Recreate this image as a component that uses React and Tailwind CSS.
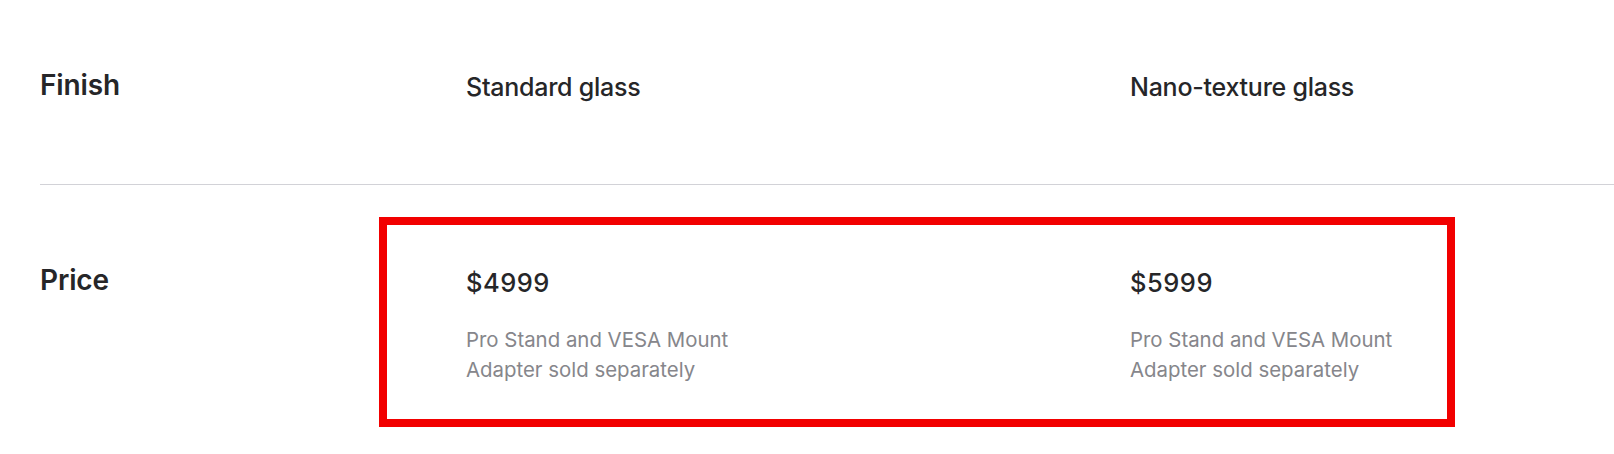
import React from 'react';

const columns = [
  { finish: 'Standard glass', price: '$4999' },
  { finish: 'Nano-texture glass', price: '$5999' },
];

const note = ['Pro Stand and VESA Mount', 'Adapter sold separately'];

function App() {
  return (
    <div className="relative h-[454px] w-full overflow-hidden bg-white font-['Inter','Liberation_Sans',sans-serif] text-[#262628] antialiased">
      {/* Finish row */}
      <div className="ml-10 grid h-[185px] grid-cols-[426px_664px_1fr] items-start border-b border-[#d2d2d7] pt-[68px]">
        <div className="text-[28px] leading-[34px] font-semibold tracking-[-0.005em]">Finish</div>
        {columns.map((c) => (
          <div key={c.finish} className="pt-[4px] text-[25px] leading-[30px] font-medium tracking-[-0.01em]">
            {c.finish}
          </div>
        ))}
      </div>

      {/* Price row */}
      <div className="ml-10 grid grid-cols-[426px_664px_1fr] items-start pt-[78px]">
        <div className="text-[28px] leading-[34px] font-semibold tracking-[-0.005em]">Price</div>
        {columns.map((c) => (
          <div key={c.price} className="pt-[5px]">
            <div className="text-[25.5px] leading-[30px] font-medium tracking-[0.02em]">{c.price}</div>
            <div className="mt-[27px] text-[20.4px] leading-[30px] text-[#86868b]">
              {note.map((line) => (
                <div key={line}>{line}</div>
              ))}
            </div>
          </div>
        ))}
      </div>

      {/* highlight annotation over the price cells */}
      <div className="pointer-events-none absolute left-[379px] top-[217px] h-[210px] w-[1076px] border-8 border-[#f20000]" />
    </div>
  );
}

export default App;
